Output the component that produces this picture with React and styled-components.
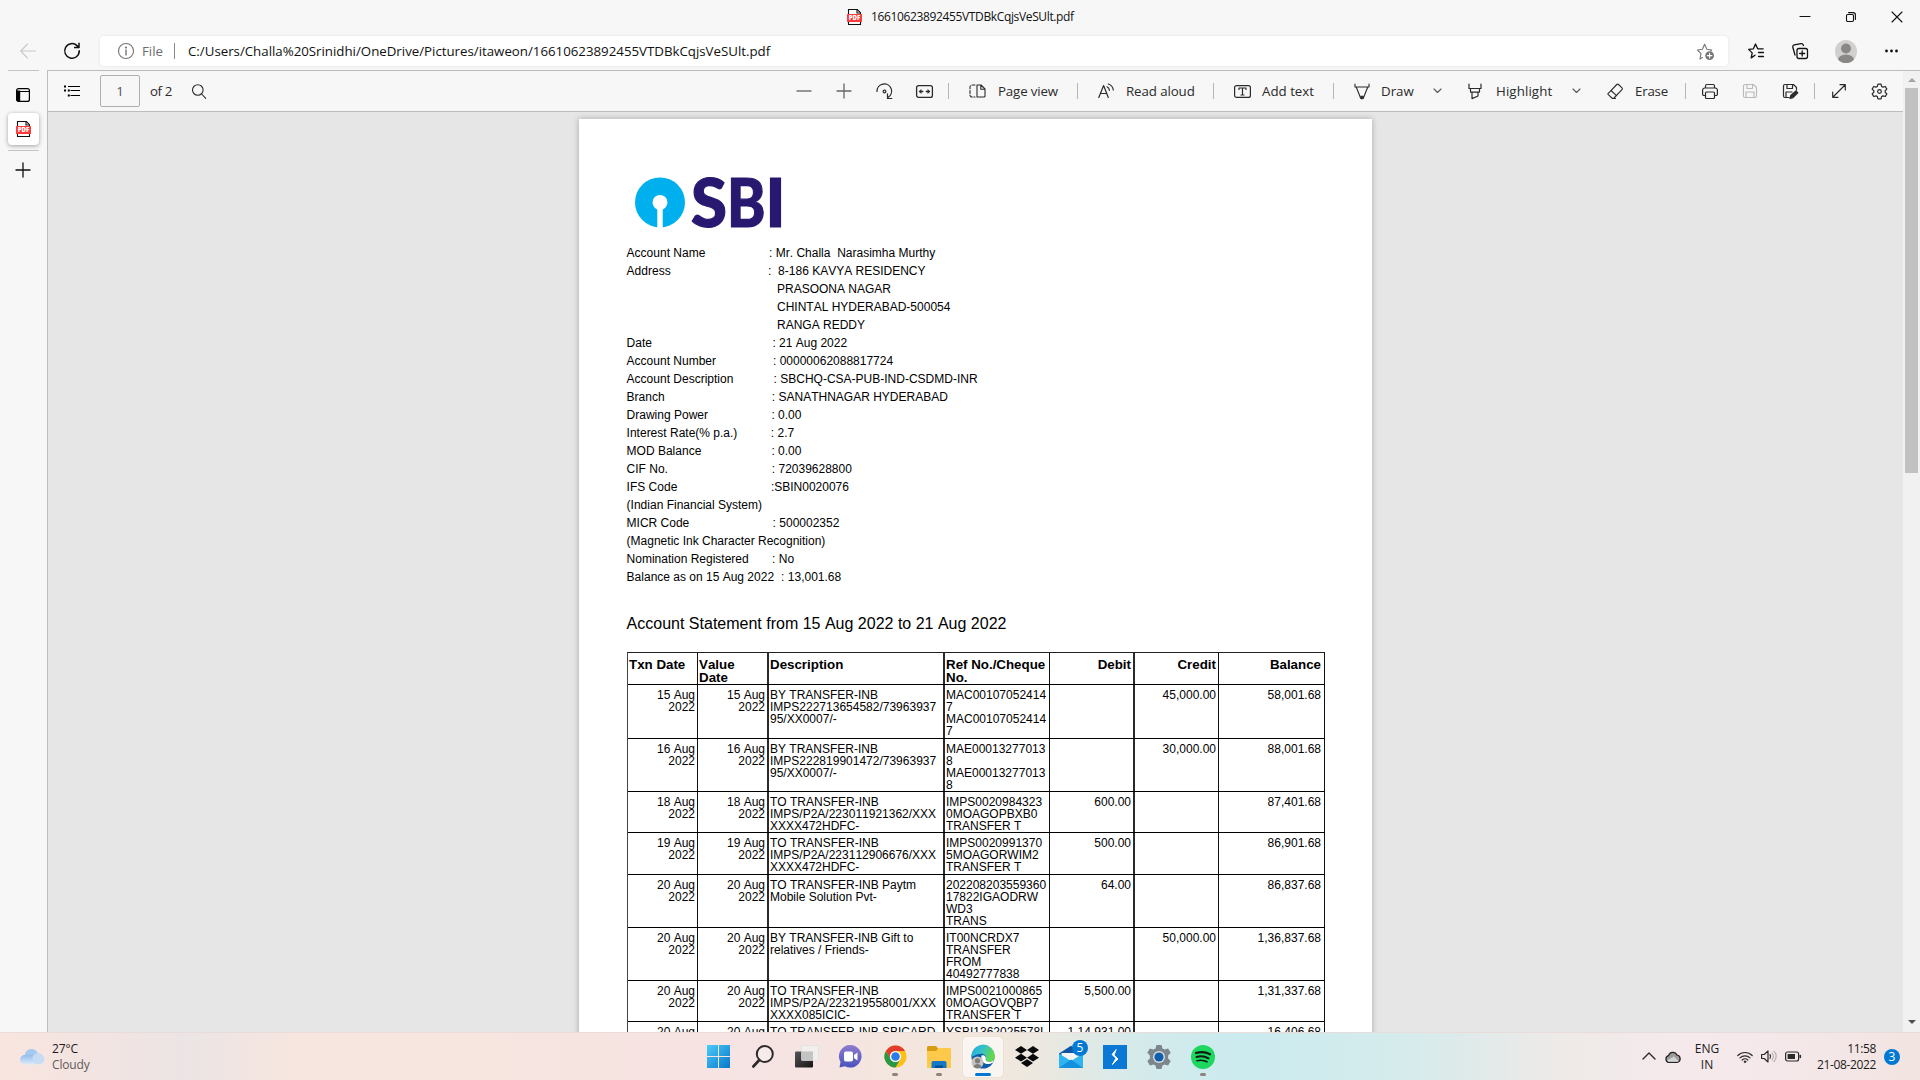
import React from "react";
import styled, { createGlobalStyle, css } from "styled-components";

const Global = createGlobalStyle`
  * { box-sizing: border-box; }
  html, body { margin: 0; padding: 0; }
  body { width: 1920px; height: 1080px; overflow: hidden; background: #f7f7f7; }
  svg { display: block; flex: none; overflow: visible; }
`;

const uiFont = css`
  font-family: "Open Sans", "Noto Sans", sans-serif;
`;

const Screen = styled.div`
  width: 1920px;
  height: 1080px;
  display: flex;
  flex-direction: column;
  overflow: hidden;
  ${uiFont}
`;

const TitleBar = styled.div`
  height: 34px;
  display: flex;
  align-items: center;
  padding-left: 847px;
`;

const Title = styled.div`
  width: 929px;
  margin: 0 0 1px 9px;
  font-size: 12px;
  line-height: 18px;
  letter-spacing: ${(p) => p.$track}px;
  color: #111;
  white-space: nowrap;
`;

const AddressRow = styled.div`
  height: 36px;
  display: flex;
  align-items: flex-start;
  padding-left: 20px;
`;

const Field = styled.div`
  width: 1628px;
  height: 30px;
  margin: 2px 0 0 20px;
  padding-left: 18px;
  display: flex;
  align-items: center;
  background: #fff;
  border-radius: 4px;
  box-shadow: 0 0 3px rgba(0, 0, 0, 0.09);
`;

const Glyph = styled.div`
  display: flex;
  flex: none;
  margin-left: ${(p) => p.$gap || 0}px;
  margin-top: ${(p) => p.$drop || 0}px;
  padding-right: ${(p) => p.$trail || 0}px;
  color: ${(p) => p.$color || "#2b2b2b"};
`;

const Label = styled.div`
  flex: none;
  width: ${(p) => p.$w}px;
  margin-left: ${(p) => p.$gap || 0}px;
  font-size: 13.3px;
  line-height: 20px;
  letter-spacing: ${(p) => p.$track || 0}px;
  color: ${(p) => p.$color || "#2b2b2b"};
  white-space: nowrap;
`;

const Bar = styled.div`
  flex: none;
  width: 1px;
  height: 16px;
  margin-left: ${(p) => p.$gap || 0}px;
  background: ${(p) => p.$color || "#b5b5b5"};
`;

const Body = styled.div`
  height: 962px;
  display: flex;
`;

const Side = styled.div`
  width: 47px;
  display: flex;
  flex-direction: column;
  align-items: center;
`;

const SideRule = styled.div`
  width: 31px;
  height: 1px;
  background: #c4c4c4;
`;

const SideTab = styled.div`
  width: 31px;
  height: 32px;
  margin: 11px 0 5px;
  display: flex;
  align-items: center;
  justify-content: center;
  background: #fff;
  border-radius: 4px;
  box-shadow: 0 1px 4px rgba(0, 0, 0, 0.35);
`;

const Viewer = styled.div`
  flex: 1;
  display: flex;
  border-top: 1px solid #bcbcbc;
  border-left: 1px solid #bcbcbc;
`;

const ViewerMain = styled.div`
  width: 1855px;
  display: flex;
  flex-direction: column;
`;

const Toolbar = styled.div`
  height: 41px;
  display: flex;
  align-items: center;
  padding-left: 16px;
  border-bottom: 1px solid #bcbcbc;
  background: #f7f7f7;
`;

const PageBox = styled.div`
  width: 40px;
  height: 32px;
  margin-left: 20px;
  display: flex;
  align-items: center;
  justify-content: center;
  border: 1px solid #b0b0b0;
  border-radius: 2px;
  font-size: 13.3px;
  color: #555;
`;

const Canvas = styled.div`
  height: 920px;
  padding: 7px 0 0 531px;
  overflow: hidden;
  background: #e6e6e6;
`;

const Paper = styled.div`
  width: 793px;
  height: 1122px;
  padding: 54px 0 0 48px;
  background: #fff;
  box-shadow: 0 0 6px rgba(0, 0, 0, 0.28);
  font-family: "Liberation Sans", Arial, sans-serif;
  font-kerning: none;
  color: #000;
`;

const LogoBox = styled.div`
  height: 71px;
`;

const Line = styled.div`
  height: 18px;
  display: flex;
  margin-left: -0.4px;
  font-size: 12px;
  line-height: 18px;
  white-space: pre;
`;

const LineLabel = styled.span`
  flex: none;
  width: ${(p) => (p.$w ? `${p.$w + 1}px` : "auto")};
`;

const Heading = styled.div`
  margin: 28px 0 18px -0.4px;
  height: 20px;
  font-size: 16px;
  line-height: 20px;
`;

const Grid = styled.div`
  width: 698px;
  border-top: 1px solid #222;
  border-left: 1px solid #444;
`;

const Row = styled.div`
  display: grid;
  grid-template-columns: 70px 71px 176px 105px 85px 84px 106px;
  height: ${(p) => p.$h}px;
  border-bottom: 1px solid #000;
  font-size: ${(p) => (p.$head ? "13.33px" : "12px")};
  font-weight: ${(p) => (p.$head ? 700 : 400)};
  line-height: ${(p) => (p.$head ? "13px" : "12px")};
`;

const Cell = styled.div`
  padding: ${(p) => (p.$head ? 5 : 4)}px ${(p) => p.$pr}px 0 ${(p) => (p.$right ? 0 : 1)}px;
  border-right: ${(p) => (p.$thick ? 2 : 1)}px solid ${(p) => (p.$thick ? "#2a2a2a" : "#111")};
  text-align: ${(p) => (p.$right ? "right" : "left")};
  white-space: pre;
`;

const Scroll = styled.div`
  width: 17px;
  display: flex;
  flex-direction: column;
  align-items: center;
  background: #f1f1f1;
`;

const Thumb = styled.div`
  width: 13px;
  height: 385px;
  margin: 6px 0 547px;
  background: #c1c1c1;
`;

const Taskbar = styled.div`
  height: 48px;
  display: flex;
  align-items: center;
  border-top: 1px solid #eadcda;
  background: linear-gradient(
    90deg,
    #f9e5df 0px,
    #f3e4e1 80px,
    #ece4e5 190px,
    #f7e6df 300px,
    #f7e5e0 480px,
    #f6e3e3 760px,
    #f4e6df 900px,
    #f3e7db 980px,
    #ece8e0 1040px,
    #d4eaeb 1140px,
    #cbebef 1240px,
    #d5ebec 1400px,
    #eeeae8 1560px,
    #f6e9ec 1700px,
    #f4e7e8 1820px,
    #f2e4e0 1920px
  );
`;

const Stack = styled.div`
  width: ${(p) => p.$w}px;
  margin-left: ${(p) => p.$gap || 0}px;
  display: flex;
  flex-direction: column;
  align-items: ${(p) => p.$align || "flex-start"};
  font-size: 12px;
  line-height: 16px;
  letter-spacing: ${(p) => p.$track || 0}px;
  color: #1b1b1b;
  white-space: nowrap;
`;

const Faint = styled.span`
  color: #5e5a59;
`;

const Apps = styled.div`
  display: flex;
  margin-left: 608px;
  gap: 4px;
`;

const AppTile = styled.div`
  position: relative;
  width: 40px;
  height: 40px;
  display: flex;
  align-items: center;
  justify-content: center;
  border-radius: 4px;
  background: ${(p) => (p.$active ? "rgba(255,255,255,0.6)" : "none")};
  box-shadow: ${(p) => (p.$active ? "0 0 1px rgba(0,0,0,0.2)" : "none")};
`;

const Mark = styled.i`
  position: absolute;
  bottom: 1px;
  width: ${(p) => (p.$active ? 16 : 6)}px;
  height: 3px;
  border-radius: 2px;
  background: ${(p) => (p.$active ? "#0078d4" : "#8c8480")};
`;

const Badge = styled.span`
  width: 16px;
  height: 16px;
  display: flex;
  align-items: center;
  justify-content: center;
  border-radius: 8px;
  background: #0078d4;
  color: #fff;
  font-size: 12px;
  line-height: 16px;
  ${(p) =>
    p.$over &&
    css`
      position: absolute;
      top: 3px;
      right: 3px;
    `}
`;

const Tray = styled.div`
  display: flex;
  align-items: center;
  margin-left: 420px;
`;

/* ---------- icons ---------- */

const Ico = ({ w = 16, h = 16, sw = 1.1, children }) => (
  <svg width={w} height={h} viewBox={`0 0 ${w} ${h}`} fill="none" stroke="currentColor" strokeWidth={sw} strokeLinecap="round" strokeLinejoin="round">
    {children}
  </svg>
);

const PdfIcon = () => (
  <svg width="15" height="16" viewBox="0 0 15 16">
    <path d="M1.5 15.5V.5h8.8l3.2 3.2v11.8z" fill="#fff" stroke="#111" strokeWidth="1.1" />
    <path d="M10 .5V4h3.5" fill="none" stroke="#111" strokeWidth="1.1" />
    <rect x="0" y="5" width="15" height="8" rx="0.6" fill="#fb3c3c" />
    <text x="7.5" y="11.2" textAnchor="middle" fontFamily="Open Sans" fontWeight="800" fontSize="6" textLength="11.5" lengthAdjust="spacingAndGlyphs" fill="#fff">PDF</text>
  </svg>
);

const Back = () => (
  <Ico><path d="M15.5 8H.7M7.5 1L.7 8l6.800 7" /></Ico>
);
const Reload = () => (
  <Ico sw={1.5}><path d="M15.3 8A7.3 7.3 0 1 1 13 2.6l1.8 1.8M15 .6v4h-4.2" strokeLinecap="square" /></Ico>
);
const Info = () => (
  <Ico><circle cx="8" cy="8" r="7.5" /><path d="M8 7v5" strokeWidth="1.4" /><circle cx="8" cy="4.6" r=".5" fill="currentColor" stroke="currentColor" /></Ico>
);
const StarAdd = () => (
  <Ico w={17} h={17}>
    <path d="M5.500 14.500L3 15.900l1-5.300L.5 7l4.900-.7L7.600 1.300l2.200 5 4.900.7-1 1" />
    <circle cx="12.600" cy="12.600" r="4.400" fill="currentColor" stroke="none" />
    <path d="M12.600 10.300v4.600M10.300 12.600h4.600" stroke="#fff" />
  </Ico>
);
const StarList = () => (
  <Ico sw={1.3}>
    <path d="M7 12.200L3.200 14.900l1-5L.6 6.400l4.800-.6L7.500 1l2.200 4.800h5.500M10.500 9.500h5M10.500 13.500h5" />
  </Ico>
);
const Collections = () => (
  <Ico sw={1.3}>
    <rect x="5" y="5.500" width="10.500" height="10" rx="2" />
    <path d="M10.200 8v5M7.700 10.500h5M3 12L.9 4.500C.5 3 1 2.200 2.300 1.900L9 .6c1.400-.2 2 .4 2.500 1.900" />
  </Ico>
);
const Avatar = () => (
  <svg width="22" height="23" viewBox="0 0 22 23">
    <defs><clipPath id="av"><ellipse cx="11" cy="11.500" rx="11" ry="11.500" /></clipPath></defs>
    <g clipPath="url(#av)">
      <rect width="22" height="23" fill="#d2d0ce" />
      <circle cx="11" cy="8.500" r="5" fill="#8a8886" />
      <ellipse cx="11" cy="20" rx="8" ry="5.500" fill="#8a8886" />
    </g>
  </svg>
);
const Dots = () => (
  <Ico w={13} h={4}><g fill="#111" stroke="none"><circle cx="1.500" cy="2" r="1.400" /><circle cx="6.500" cy="2" r="1.400" /><circle cx="11.500" cy="2" r="1.400" /></g></Ico>
);
const TabsIcon = () => (
  <Ico w={14} h={14} sw={1.200}>
    <rect x=".6" y=".6" width="12.800" height="12.800" rx="2" />
    <path d="M1 3.500h12.500" />
    <path d="M1 3h2.600v10.400H2.500L1 12z" fill="currentColor" />
  </Ico>
);
const Plus = ({ s = 14, sw = 1.200 }) => (
  <Ico w={s} h={s} sw={sw}><path d={`M${s / 2} 0v${s}M0 ${s / 2}h${s}`} /></Ico>
);
const Contents = () => (
  <Ico sw={1.200}>
    <path d="M4 3.500h12M6.500 7.500h9.500M6.500 12.500h9.500" strokeLinecap="butt" />
    <g fill="currentColor" stroke="none"><rect x="0" y="2.500" width="2" height="2" /><rect x="0" y="6.500" width="2" height="2" /><rect x="3.800" y="6.500" width="2" height="2" /><rect x="3.800" y="11.500" width="2" height="2" /></g>
  </Ico>
);
const Find = () => (
  <Ico w={14} h={15}><circle cx="5.800" cy="6" r="5.300" /><path d="M9.700 10l4 4.300" /></Ico>
);
const Rotate = () => (
  <Ico w={17} h={17} sw={1.200}><path d="M1 8.500A7.300 7.300 0 1 1 12 14.500M11.500 10.800v4.700h4.300" /><circle cx="8.500" cy="8.500" r="1.400" /></Ico>
);
const Fit = () => (
  <Ico w={17} h={13} sw={1.300}>
    <rect x=".6" y=".6" width="15.800" height="11.800" rx="2" />
    <path d="M3.500 6.500h3.300M10.200 6.500h3.300" /><path d="M5 4.800L3.200 6.500 5 8.200zM12 4.800l1.800 1.700L12 8.200z" fill="currentColor" strokeWidth=".6" />
  </Ico>
);
const PageView = () => (
  <Ico w={17} h={14}>
    <path d="M6 1H3.200A2 2 0 0 0 1 3v8a2 2 0 0 0 2.200 2H6" strokeDasharray="3 1.600" />
    <path d="M8 1h4l4 4v7a1 1 0 0 1-1 1H8zM11.800 1.200V5.200H16" />
  </Ico>
);
const ReadAloud = () => (
  <Ico sw={1.200}><path d="M.8 14.500L5.600 2.500l4.700 12M2.400 10.500h6.300M9 3.800c1.600.7 2.300 1.900 2.400 3.500M10.300 1c3 1 4.600 3 5 6" /></Ico>
);
const AddText = () => (
  <Ico w={17} h={13} sw={1.200}><rect x=".6" y=".6" width="15.800" height="11.800" rx="2" /><path d="M5 4.500V3h7v1.500M8.500 3v7M7 10h3" /></Ico>
);
const Draw = () => (
  <Ico w={16} h={17}><path d="M1 1v3h14V1M2.200 4l4.600 11.500h2.400L13.800 4" /><path d="M6.800 13.300h2.400L8 16z" fill="currentColor" /></Ico>
);
const Highlight = () => (
  <Ico w={14} h={17} sw={1.200}><path d="M1 1v4.500h12V1M2.500 5.500v3.600h9V5.500M4 9.100v6.500l6-2.600V9.100" /></Ico>
);
const Eraser = () => (
  <Ico w={16} h={17}><path d="M5.500 15.500h3M1.300 10.300L9.800 1.500c.5-.5 1.200-.5 1.700 0l3.500 3.400c.5.5.5 1.200 0 1.700L7 15c-.6.6-1.500.6-2.100 0l-3.600-3.300c-.5-.5-.5-1 0-1.400zM4 7.500l5.500 5.200" /></Ico>
);
const Chev = ({ up, w = 7, sw = 1.100 }) => (
  <Ico w={w} h={w / 2 + 0.500} sw={sw}><path d={up ? `M0 ${w / 2}L${w / 2} 0L${w} ${w / 2}` : `M0 0L${w / 2} ${w / 2}L${w} 0`} /></Ico>
);
const Printer = () => (
  <Ico w={16} h={15} sw={1.200}><path d="M3.500 4V2a1.500 1.500 0 0 1 1.500-1.500h6A1.500 1.500 0 0 1 12.500 2v2M3.500 11.500H1.800A1.200 1.200 0 0 1 .6 10.300V6.200A2.200 2.200 0 0 1 2.800 4h10.400a2.200 2.200 0 0 1 2.200 2.200v4.100a1.200 1.200 0 0 1-1.200 1.200h-1.700" /><rect x="3.500" y="8" width="9" height="6.500" rx="1" /></Ico>
);
const Save = () => (
  <Ico w={14} h={14}><path d="M2 .5h8.500l3 3V12a1.500 1.500 0 0 1-1.500 1.500H2A1.500 1.500 0 0 1 .5 12V2A1.500 1.500 0 0 1 2 .5zM4 .6v3.900h5.500V.6M3 13.400V8h8v5.400" /></Ico>
);
const SaveAs = () => (
  <Ico w={15} h={15} sw={1.200}><path d="M6 13.500H2A1.500 1.500 0 0 1 .5 12V2A1.500 1.500 0 0 1 2 .5h8.500l3 3V6M4 .6v3.900h5.500V.6M3 13.400V8h6" /><path d="M7 14.500l.8-3L13 7l1.800 1.800L10 13.600z" fill="currentColor" /></Ico>
);
const Expand = () => (
  <Ico w={14} h={14} sw={1.200}><path d="M1 13L13 1M8 .7h5.300V6M.7 8v5.300H6" /></Ico>
);
const Gear = ({ size = 17 }) => (
  <svg width={size} height={size} viewBox="0 0 24 24" fill="none" stroke="currentColor" strokeWidth="1.700" strokeLinejoin="round">
    <path d="M9.800 1.500h4.400l.8 3.300 2 1.100 3.200-1 2.200 3.800-2.400 2.300v2l2.400 2.300-2.200 3.800-3.200-1-2 1.100-.8 3.300H9.800L9 19.200l-2-1.100-3.200 1-2.200-3.800L4 13v-2L1.600 8.700l2.200-3.800 3.200 1 2-1.100z" />
    <circle cx="12" cy="12" r="2.600" />
  </svg>
);

const SbiLogo = () => (
  <svg width="160" height="71" viewBox="0 0 160 71">
    <circle cx="33" cy="29.400" r="25" fill="#00b0ee" />
    <circle cx="33" cy="29.400" r="7.500" fill="#fff" />
    <rect x="30.300" y="31" width="5.400" height="24" fill="#fff" />
    <g fill="#28186f" stroke="#28186f" strokeWidth="1.200" fontFamily="Lato" fontWeight="900" fontSize="66">
      <text x="64" y="53.800" textLength="36" lengthAdjust="spacingAndGlyphs">S</text>
      <text x="100" y="53.800" textLength="38.500" lengthAdjust="spacingAndGlyphs">B</text>
      <text x="138.500" y="53.800">I</text>
    </g>
  </svg>
);

const Cloud = () => (
  <svg width="24" height="16" viewBox="0 0 24 16">
    <defs><linearGradient id="cl" x1="0" y1="0" x2="0" y2="1"><stop offset="0" stopColor="#94bdec" /><stop offset="1" stopColor="#dcebfa" /></linearGradient></defs>
    <circle cx="11.500" cy="7" r="7" fill="#a4c8ef" />
    <rect x="0" y="6" width="24" height="9.500" rx="4.700" fill="url(#cl)" />
    <circle cx="18" cy="9.500" r="5.500" fill="#c5dcf4" />
  </svg>
);

const WinLogo = () => (
  <svg width="24" height="23" viewBox="0 0 24 23">
    <defs><linearGradient id="wl" gradientUnits="userSpaceOnUse" x1="0" y1="0" x2="23" y2="23"><stop offset="0" stopColor="#4ccbfa" /><stop offset="1" stopColor="#0877c9" /></linearGradient></defs>
    <path d="M0 0h11v11H0zM12 0h11v11H12zM0 12h11v11H0zM12 12h11v11H12z" fill="url(#wl)" />
  </svg>
);
const SearchApp = () => (
  <svg width="22" height="23" viewBox="0 0 22 23" fill="none" stroke="#2c2a2a"><circle cx="12.800" cy="9" r="8" fill="#f6f0ee" fillOpacity=".6" strokeWidth="2" /><path d="M7.300 15L1.300 21.500" strokeWidth="2.600" strokeLinecap="round" /></svg>
);
const TaskView = () => (
  <svg width="24" height="23" viewBox="0 0 24 23"><defs><linearGradient id="tv" x1="0" y1="0" x2="1" y2="1"><stop offset="0" stopColor="#555" /><stop offset="1" stopColor="#151515" /></linearGradient></defs><rect y="6.500" width="18" height="16" rx="1" fill="url(#tv)" /><rect x="6.500" y=".5" width="17" height="15" rx="1" fill="#f0f0f0" fillOpacity=".9" stroke="#ddd" strokeWidth=".6" /><rect x="6.500" y="6.500" width="11.500" height="9" fill="#c4c4c4" /></svg>
);
const Chat = () => (
  <svg width="24" height="23" viewBox="0 0 24 23"><defs><linearGradient id="ch" x1="0" y1="0" x2="0" y2="1"><stop offset="0" stopColor="#8f7bd0" /><stop offset="1" stopColor="#4b53bc" /></linearGradient></defs><path d="M11.500 0A11.300 11.300 0 1 1 6 21.300L.5 22.500l1-5.500A11.300 11.300 0 0 1 11.500 0z" fill="url(#ch)" /><rect x="5" y="6.500" width="9" height="10" rx="1.800" fill="#fff" /><path d="M15 10l3.500-2.500v8L15 13z" fill="#fff" /></svg>
);
const Chrome = () => (
  <svg width="23" height="23" viewBox="0 0 48 48">
    <circle cx="24" cy="24" r="23" fill="#fbc116" />
    <path d="M4 12.500A23 23 0 0 1 44 12.500H24a11.500 11.500 0 0 0-10 17.200z" fill="#e33b2e" />
    <path d="M4 12.500l10 17.300A11.500 11.500 0 0 0 34 29.700L24 47A23 23 0 0 1 4 12.500z" fill="#279847" />
    <circle cx="24" cy="24" r="11.500" fill="#fff" /><circle cx="24" cy="24" r="9" fill="#2a7de9" />
  </svg>
);
const Folder = () => (
  <svg width="24" height="22" viewBox="0 0 24 22"><path d="M0 1.500C0 .6.600 0 1.500 0H9l2.500 3v4H0z" fill="#d99c10" /><path d="M0 5h9l3-3h10.500c.9 0 1.500.6 1.500 1.500V22H0z" fill="#fcc94a" /><path d="M4.500 22v-5c0-1.300.8-2 2-2h11c1.200 0 2 .7 2 2v5z" fill="#1478c7" /><path d="M8 22v-2.500h8V22z" fill="#0a4e93" /></svg>
);
const Edge = () => (
  <svg width="24" height="24" viewBox="0 0 24 24">
    <defs><linearGradient id="eg" x1="0" y1="0" x2="1" y2=".4"><stop offset="0" stopColor="#25a8e8" /><stop offset=".5" stopColor="#35c1c8" /><stop offset="1" stopColor="#62d84b" /></linearGradient></defs>
    <circle cx="12" cy="12" r="11.500" fill="#0c5ba7" />
    <path d="M.5 12A11.500 11.500 0 0 1 23.700 10.500c.4 4-2 6.300-5.500 6.300-2.500 0-4-1.200-3.500-2.500 1.500-3-1-5.500-4.500-5.500-5 0-8 3-9.700 3.200z" fill="url(#eg)" />
    <path d="M10.500 10.500c3-1 5 1.300 4.200 3.800-.5 1.300 1 2.500 3.500 2.500 2 0 3.500-.6 4.600-2-.2 1.200-.6 2.200-1.200 3-6 3.500-12.500-.8-11.100-7.300z" fill="#fff" />
    <circle cx="6.500" cy="17.500" r="6" fill="#c6c4c2" /><circle cx="6.500" cy="15.800" r="2.600" fill="#7f7d7b" /><path d="M2.500 21.500c1-3.500 7-3.500 8 0-2 2.500-6 2.500-8 0z" fill="#7f7d7b" />
  </svg>
);
const Dropbox = () => (
  <svg width="24" height="21" viewBox="0 0 24 21" fill="#0a0a0a"><path d="M6 0l6 3.900-6 3.900-6-3.900zM18 0l6 3.900-6 3.900-6-3.900zM6 7.800l6 3.900-6 3.900-6-3.900zM18 7.800l6 3.900-6 3.900-6-3.900zM12 13.200l6 3.900-6 3.900-6-3.900z" /></svg>
);
const Mail = () => (
  <svg width="24" height="24" viewBox="0 0 24 24"><path d="M0 8.500L12 .8l12 7.700V13H0z" fill="#0d57a6" /><path d="M2.500 8h19v8h-19z" fill="#f4f4f4" /><path d="M0 8.500L12 16l12-7.500V23H0z" fill="#2fb4f0" /><path d="M0 23l12-8.500L24 23z" fill="#1490df" /></svg>
);
const Bolt = () => (
  <svg width="24" height="24" viewBox="0 0 24 24"><rect width="24" height="24" fill="#0b78d6" /><path d="M13.200 4.500L9 9.500l4 3.800-3.600 6.200 5.600-5.500-4-4z" fill="#fff" stroke="#fff" strokeWidth="1" strokeLinejoin="round" /></svg>
);
const Settings = () => (
  <svg width="24" height="24" viewBox="0 0 24 24"><path d="M9.500 0h5l1 3.500 2 1 3.600-1 2.600 4.300-2.600 2.700v2.900l2.600 2.700-2.600 4.300-3.600-1-2 1-1 3.600h-5l-1-3.600-2-1-3.600 1L.3 16.100l2.600-2.700v-2.900L.3 7.800l2.600-4.300 3.600 1 2-1z" fill="#7d858d" /><circle cx="12" cy="12" r="6" fill="#d9dde0" /><circle cx="12" cy="12" r="4.600" fill="#0f5fae" /></svg>
);
const Spotify = () => (
  <svg width="24" height="24" viewBox="0 0 24 24"><circle cx="12" cy="12" r="12" fill="#1ed760" /><g fill="none" stroke="#0d1a12" strokeLinecap="round"><path d="M5 8c4.500-1.400 10-1 14 1.300" strokeWidth="2.300" /><path d="M5.500 12c4-1.200 8.500-.7 12 1.300" strokeWidth="2" /><path d="M6 15.700c3.500-.9 7-.6 10 1.100" strokeWidth="1.600" /></g></svg>
);

const TrayCloud = () => (
  <svg width="16" height="12" viewBox="0 0 16 12"><path d="M4 11.300a3.400 3.400 0 0 1-.4-6.700 4.400 4.400 0 0 1 8.300-.6 3.700 3.700 0 0 1 .3 7.300z" fill="#9c9c9c" stroke="#222" strokeWidth="1.200" /><path d="M2 9.500L9 5.500l4.500 4.500-1 .8H3.500z" fill="#d4d4d4" /></svg>
);
const Wifi = () => (
  <Ico w={16} h={12} sw={1.200}><path d="M.8 4.500a10.200 10.200 0 0 1 14.400 0M3 6.900a7 7 0 0 1 10 0M5.200 9a4 4 0 0 1 5.600 0" /><circle cx="8" cy="10.700" r="1" fill="currentColor" strokeWidth=".5" /></Ico>
);
const Sound = () => (
  <Ico w={16} h={13} sw={1.200}><path d="M.6 4.500h2.600L7 1v11L3.200 8.500H.6zM9 4.700c.8 1.200.8 2.500 0 3.600" /><path d="M11 3c1.800 2.300 1.800 4.700 0 7M13 1.200c3 3.500 3 7 0 10.500" opacity=".3" /></Ico>
);
const Battery = () => (
  <Ico w={16} h={11} sw={1.200}><rect x=".6" y="1" width="13" height="9" rx="2" /><rect x="2.600" y="3" width="7.400" height="5" fill="currentColor" stroke="none" /><path d="M15.300 4.500v2" strokeWidth="1.600" /></Ico>
);

/* ---------- data ---------- */

const details = [
  ["Account Name", 141.5, ": Mr. Challa  Narasimha Murthy"],
  ["Address", 140.5, ":  8-186 KAVYA RESIDENCY"],
  ["", 149.4, "PRASOONA NAGAR"],
  ["", 149.4, "CHINTAL HYDERABAD-500054"],
  ["", 149.4, "RANGA REDDY"],
  ["Date", 144.8, ": 21 Aug 2022"],
  ["Account Number", 145.4, ": 00000062088817724"],
  ["Account Description", 146, ": SBCHQ-CSA-PUB-IND-CSDMD-INR"],
  ["Branch", 144.2, ": SANATHNAGAR HYDERABAD"],
  ["Drawing Power", 143.8, ": 0.00"],
  ["Interest Rate(% p.a.)", 143.2, ": 2.7"],
  ["MOD Balance", 143.8, ": 0.00"],
  ["CIF No.", 144.2, ": 72039628800"],
  ["IFS Code", 143.3, ":SBIN0020076"],
  ["(Indian Financial System)", 0, ""],
  ["MICR Code", 145, ": 500002352"],
  ["(Magnetic Ink Character Recognition)", 0, ""],
  ["Nomination Registered", 144.5, ": No"],
  ["Balance as on 15 Aug 2022", 153.5, ": 13,001.68"],
];

const rows = [
  [54, "15 Aug\n2022", "BY TRANSFER-INB\nIMPS222713654582/73963937\n95/XX0007/-", "MAC00107052414\n7\nMAC00107052414\n7", "", "45,000.00", "58,001.68"],
  [53, "16 Aug\n2022", "BY TRANSFER-INB\nIMPS222819901472/73963937\n95/XX0007/-", "MAE00013277013\n8\nMAE00013277013\n8", "", "30,000.00", "88,001.68"],
  [41, "18 Aug\n2022", "TO TRANSFER-INB\nIMPS/P2A/223011921362/XXX\nXXXX472HDFC-", "IMPS0020984323\n0MOAGOPBXB0\nTRANSFER T", "600.00", "", "87,401.68"],
  [42, "19 Aug\n2022", "TO TRANSFER-INB\nIMPS/P2A/223112906676/XXX\nXXXX472HDFC-", "IMPS0020991370\n5MOAGORWIM2\nTRANSFER T", "500.00", "", "86,901.68"],
  [53, "20 Aug\n2022", "TO TRANSFER-INB Paytm\nMobile Solution Pvt-", "202208203559360\n17822IGAODRW\nWD3\nTRANS", "64.00", "", "86,837.68"],
  [53, "20 Aug\n2022", "BY TRANSFER-INB Gift to\nrelatives / Friends-", "IT00NCRDX7\nTRANSFER\nFROM\n40492777838", "", "50,000.00", "1,36,837.68"],
  [41, "20 Aug\n2022", "TO TRANSFER-INB\nIMPS/P2A/223219558001/XXX\nXXXX085ICIC-", "IMPS0021000865\n0MOAGOVQBP7\nTRANSFER T", "5,500.00", "", "1,31,337.68"],
  [54, "20 Aug\n2022", "TO TRANSFER-INB SBICARD", "YSBI1362025578I", "1,14,931.00", "", "16,406.68"],
];

const apps = [
  [WinLogo], [SearchApp], [TaskView], [Chat], [Chrome, "run"], [Folder, "run"],
  [Edge, "active"], [Dropbox], [Mail, "badge"], [Bolt], [Settings], [Spotify, "run"],
];

function TableRow({ h, cells, head }) {
  return (
    <Row $h={h} $head={head}>
      {cells.map((c, i) => (
        <Cell key={i} $head={head} $pr={i === 6 ? 3 : 2} $right={head ? i > 3 : i < 2 || i > 3} $thick={i === 1 || i === 2 || i === 4}>{c}</Cell>
      ))}
    </Row>
  );
}

export default function App() {
  return (
    <Screen>
      <Global />
      <TitleBar>
        <PdfIcon />
        <Title $track={-0.36}>16610623892455VTDBkCqjsVeSUlt.pdf</Title>
        <Ico w={10} h={2}><path d="M0 .5h10" stroke="#111" /></Ico>
        <Glyph $gap={36} $color="#111"><Ico w={10} h={10}><rect x=".5" y="2.500" width="7" height="7" rx="1.200" /><path d="M2.500 .6h4.600a2.300 2.300 0 0 1 2.300 2.300v4.600" /></Ico></Glyph>
        <Glyph $gap={36} $color="#111"><Ico w={10} h={10}><path d="M0 0l10 10M10 0L0 10" /></Ico></Glyph>
      </TitleBar>
      <AddressRow>
        <Glyph $drop={9} $color="#c9c9c9"><Back /></Glyph>
        <Glyph $gap={28} $drop={9} $color="#111"><Reload /></Glyph>
        <Field>
          <Glyph $color="#757575"><Info /></Glyph>
          <Label $gap={8} $w={32} $color="#6d6d6d">File</Label>
          <Bar $color="#8a8a8a" />
          <Label $gap={13} $w={1509} $track={-0.015} $color="#111">C:/Users/Challa%20Srinidhi/OneDrive/Pictures/itaweon/16610623892455VTDBkCqjsVeSUlt.pdf</Label>
          <Glyph $color="#767676"><StarAdd /></Glyph>
        </Field>
        <Glyph $gap={20} $drop={9} $color="#111"><StarList /></Glyph>
        <Glyph $gap={28} $drop={9} $color="#111"><Collections /></Glyph>
        <Glyph $gap={27} $drop={6}><Avatar /></Glyph>
        <Glyph $gap={28} $drop={15}><Dots /></Glyph>
      </AddressRow>
      <Body>
        <Side>
          <SideRule />
          <Glyph $drop={17} $trail={1} $color="#000"><TabsIcon /></Glyph>
          <SideTab><PdfIcon /></SideTab>
          <SideRule />
          <Glyph $drop={12} $trail={2} $color="#111"><Plus s={14} sw={1.3} /></Glyph>
        </Side>
        <Viewer>
          <ViewerMain>
            <Toolbar>
              <Contents />
              <PageBox>1</PageBox>
              <Label $gap={10} $w={42} $track={-0.4}>of 2</Label>
              <Glyph><Find /></Glyph>
              <Glyph $gap={591}><Ico w={14} h={2}><path d="M0 1h14" strokeWidth="1.5" stroke="#777" /></Ico></Glyph>
              <Glyph $gap={26} $color="#666"><Plus s={14} sw={1.3} /></Glyph>
              <Glyph $gap={25}><Rotate /></Glyph>
              <Glyph $gap={23}><Fit /></Glyph>
              <Bar $gap={15} />
              <Glyph $gap={20}><PageView /></Glyph>
              <Label $gap={12} $w={79} $track={-0.15}>Page view</Label>
              <Bar />
              <Glyph $gap={20}><ReadAloud /></Glyph>
              <Label $gap={12} $w={87} $track={-0.1}>Read aloud</Label>
              <Bar />
              <Glyph $gap={20}><AddText /></Glyph>
              <Label $gap={11} $w={71}>Add text</Label>
              <Bar />
              <Glyph $gap={20}><Draw /></Glyph>
              <Label $gap={11} $w={53}>Draw</Label>
              <Glyph $color="#555"><Chev /></Glyph>
              <Glyph $gap={27}><Highlight /></Glyph>
              <Label $gap={14} $w={77} $track={0.1}>Highlight</Label>
              <Glyph $color="#555"><Chev /></Glyph>
              <Glyph $gap={27}><Eraser /></Glyph>
              <Label $gap={12} $w={50} $track={-0.2}>Erase</Label>
              <Bar />
              <Glyph $gap={16}><Printer /></Glyph>
              <Glyph $gap={25} $color="#b9b9b9"><Save /></Glyph>
              <Glyph $gap={26}><SaveAs /></Glyph>
              <Bar $gap={16} />
              <Glyph $gap={17}><Expand /></Glyph>
              <Glyph $gap={25}><Gear /></Glyph>
            </Toolbar>
            <Canvas>
              <Paper>
                <LogoBox><SbiLogo /></LogoBox>
                {details.map(([k, w, v], i) => (
                  <Line key={i}><LineLabel $w={w}>{k}</LineLabel>{v}</Line>
                ))}
                <Heading>Account Statement from 15 Aug 2022 to 21 Aug 2022</Heading>
                <Grid>
                  <TableRow h={32} head cells={["Txn Date", "Value\nDate", "Description", "Ref No./Cheque\nNo.", "Debit", "Credit", "Balance"]} />
                  {rows.map(([h, d, ...rest], i) => (
                    <TableRow key={i} h={h} cells={[d, d, ...rest]} />
                  ))}
                </Grid>
              </Paper>
            </Canvas>
          </ViewerMain>
          <Scroll>
            <Glyph $drop={7} $color="#a3a3a3"><svg width="8" height="4"><path d="M0 4l4-4 4 4z" fill="currentColor" /></svg></Glyph>
            <Thumb />
            <Glyph $color="#505050"><svg width="8" height="4"><path d="M0 0h8L4 4z" fill="currentColor" /></svg></Glyph>
          </Scroll>
        </Viewer>
      </Body>
      <Taskbar>
        <Glyph $gap={20}><Cloud /></Glyph>
        <Stack $gap={8} $w={39} $track={-0.15}><span>27°C</span><Faint>Cloudy</Faint></Stack>
        <Apps>
          {apps.map(([Icon, state], i) => (
            <AppTile key={i} $active={state === "active"}>
              <Icon />
              {(state === "run" || state === "active") && <Mark $active={state === "active"} />}
              {state === "badge" && <Badge $over>5</Badge>}
            </AppTile>
          ))}
        </Apps>
        <Tray>
          <Glyph><Chev up w={12} sw={1.4} /></Glyph>
          <Glyph $gap={10}><TrayCloud /></Glyph>
          <Stack $gap={12} $w={28} $align="center"><span>ENG</span><span>IN</span></Stack>
          <Glyph $gap={16}><Wifi /></Glyph>
          <Glyph $gap={8}><Sound /></Glyph>
          <Glyph $gap={8}><Battery /></Glyph>
          <Stack $gap={12} $w={63} $align="flex-end" $track={-0.35}><span>11:58</span><span>21-08-2022</span></Stack>
          <Glyph $gap={8}><Badge>3</Badge></Glyph>
        </Tray>
      </Taskbar>
    </Screen>
  );
}
